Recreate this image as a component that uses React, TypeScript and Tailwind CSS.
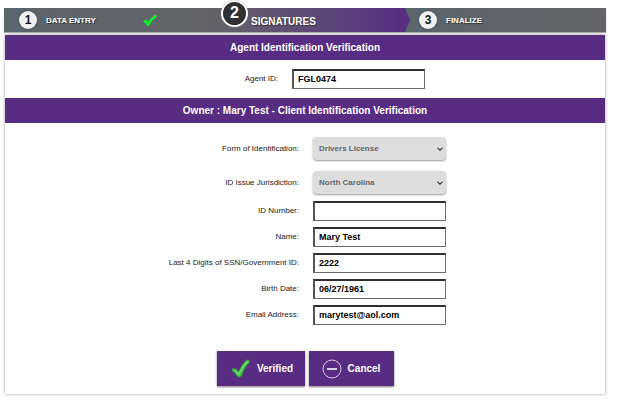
import React, { useState } from "react";

function Header({ children }: { children: React.ReactNode }) {
  return (
    <h2 className="flex h-[25px] items-center justify-center bg-[#582c83] text-[10px] font-bold text-white">
      {children}
    </h2>
  );
}

const inputClass =
  "h-5 w-[133px] border border-t-2 border-l-2 border-[#6b6b6b] border-t-[#2f2f2f] border-l-[#555555] bg-white px-1 pb-px text-[9px] font-bold text-black outline-none";

function Field({ id, label, value }: { id: string; label: string; value: string }) {
  return (
    <>
      <label htmlFor={id} className="text-right">
        {label}
      </label>
      <input id={id} type="text" defaultValue={value} className={inputClass} />
    </>
  );
}

function SelectField({ id, label, value }: { id: string; label: string; value: string }) {
  return (
    <>
      <label htmlFor={id} className="text-right">
        {label}
      </label>
      <div className="relative w-[133px]">
        <select
          id={id}
          disabled
          defaultValue={value}
          className="block h-[23px] w-full appearance-none rounded-sm bg-[#dddddd] px-[6px] text-[8px] font-bold text-[#666666] opacity-100 shadow-[0_1px_2px_rgba(0,0,0,0.4)]"
        >
          <option>{value}</option>
        </select>
        <svg
          viewBox="0 0 6 4"
          className="pointer-events-none absolute top-[10px] right-[3px] h-1 w-[6px]"
          fill="none"
          stroke="#444444"
          strokeWidth="1.3"
          aria-hidden="true"
        >
          <path d="M.4.6 3 3.2 5.6.6" />
        </svg>
      </div>
    </>
  );
}

function Step({ n, label }: { n: number; label: string }) {
  return (
    <>
      <span className="flex size-[18px] shrink-0 items-center justify-center rounded-full bg-[#f0f0f0] text-xs font-bold text-[#161616] shadow-[0_0_2px_#333333]">
        {n}
      </span>
      <span className="ml-[9px] pt-px text-[8px] font-bold text-white [text-shadow:1px_1px_1px_#333333]">{label}</span>
    </>
  );
}

export default function App() {
  const [status, setStatus] = useState("");
  return (
    <main className="bg-white pt-2 pr-[17px] pb-1 pl-1 font-['Liberation_Sans',Arial,sans-serif] text-[8px] text-[#222222]">
      <ol className="grid h-6 grid-cols-[201fr_205fr_196fr] bg-[#5c676d] shadow-[0_1px_1px_#aaaaaa]">
        <li className="flex items-center bg-linear-to-r from-[#5b666d] to-[#646466] pl-[15px]">
          <Step n={1} label="DATA ENTRY" />
          <svg viewBox="0 0 14 12" className="ml-[47px] h-3 w-[14px]" fill="#10ee2c" aria-label="Complete">
            <path d="M0 7.5 3.2 5.2 5 8.1Q8.3 3 12.5.2L14 2.3Q8.8 6.2 6 12H4.5Q2.8 9 0 7.5Z" />
          </svg>
        </li>
        <li className="flex bg-linear-to-r from-[#646466] to-[#582c83] pl-4 [clip-path:polygon(0_-10px,calc(100%-5px)_-10px,calc(100%-5px)_0,100%_50%,calc(100%-5px)_100%,0_100%)]">
          <span className="-mt-2 flex size-[27px] shrink-0 items-center justify-center rounded-full border-2 border-white bg-[#303033] pb-px text-base font-bold text-white shadow-[0_0_1px_#777777]">
            2
          </span>
          <span className="mt-2 ml-[3px] text-[10px] leading-3 font-bold text-white [text-shadow:1px_1px_1px_#333333]">
            SIGNATURES
          </span>
        </li>
        <li className="flex items-center bg-linear-to-r from-[#5b666d] to-[#646466] pl-[9px]">
          <Step n={3} label="FINALIZE" />
        </li>
      </ol>

      <form
        className="mx-px mt-[3px] shadow-[0_0_3px_#999999]"
        onSubmit={(e) => {
          e.preventDefault();
          setStatus("verified");
        }}
        data-status={status}
      >
        <Header>Agent Identification Verification</Header>
        <div className="grid grid-cols-[273fr_313fr] items-center gap-x-[14px] py-[9px]">
          <Field id="agent" label="Agent ID:" value="FGL0474" />
        </div>
        <Header>Owner : Mary Test - Client Identification Verification</Header>
        <div className="grid grid-cols-[294fr_292fr] items-center gap-x-[14px] gap-y-[11px] pt-[14px]">
          <SelectField id="form" label="Form of Identification:" value="Drivers License" />
          <SelectField id="jurisdiction" label="ID Issue Jurisdiction:" value="North Carolina" />
        </div>
        <div className="grid grid-cols-[294fr_292fr] items-center gap-x-[14px] gap-y-[6px] pt-[7px]">
          <Field id="number" label="ID Number:" value="" />
          <Field id="name" label="Name:" value="Mary Test" />
          <Field id="ssn" label="Last 4 Digits of SSN/Government ID:" value="2222" />
          <Field id="birth" label="Birth Date:" value="06/27/1961" />
          <Field id="email" label="Email Address:" value="marytest@aol.com" />
        </div>
        <div className="flex justify-center gap-1 pt-[26px] pb-2">
          <button
            type="submit"
            className="flex h-[35px] w-[88px] items-center justify-center gap-[6px] bg-[#582c83] pl-[3px] text-[10px] font-bold text-white shadow-[0_1px_2px_#777777]"
          >
            <svg viewBox="0 0 20 19" className="h-[19px] w-5" aria-hidden="true">
              <path
                d="M.8 10.5Q2.5 8 5 10.2L7.5 12.5Q10.5 5.5 15.5.8Q18.8.2 19 3Q13.5 8 10.5 17.3Q8 19.2 6 17.2Q4 13.5.8 11.8Z"
                fill="#42bd4c"
                stroke="#28772f"
                strokeWidth=".6"
              />
              <path d="M3.5 11 7.8 15.5Q11 7.5 17 2.2" fill="none" stroke="#6bdc6a" strokeWidth="1.5" />
            </svg>
            Verified
          </button>
          <button
            type="button"
            onClick={() => setStatus("cancelled")}
            className="flex h-[35px] w-[85px] items-center justify-center gap-[6px] bg-[#582c83] text-[10px] font-bold text-white shadow-[0_1px_2px_#777777]"
          >
            <svg viewBox="0 0 20 20" className="size-5" fill="none" stroke="#d9cfe3" aria-hidden="true">
              <circle cx="10" cy="10" r="9" strokeWidth="1" />
              <path d="M5 10h10" strokeWidth="2" />
            </svg>
            Cancel
          </button>
        </div>
      </form>
    </main>
  );
}
